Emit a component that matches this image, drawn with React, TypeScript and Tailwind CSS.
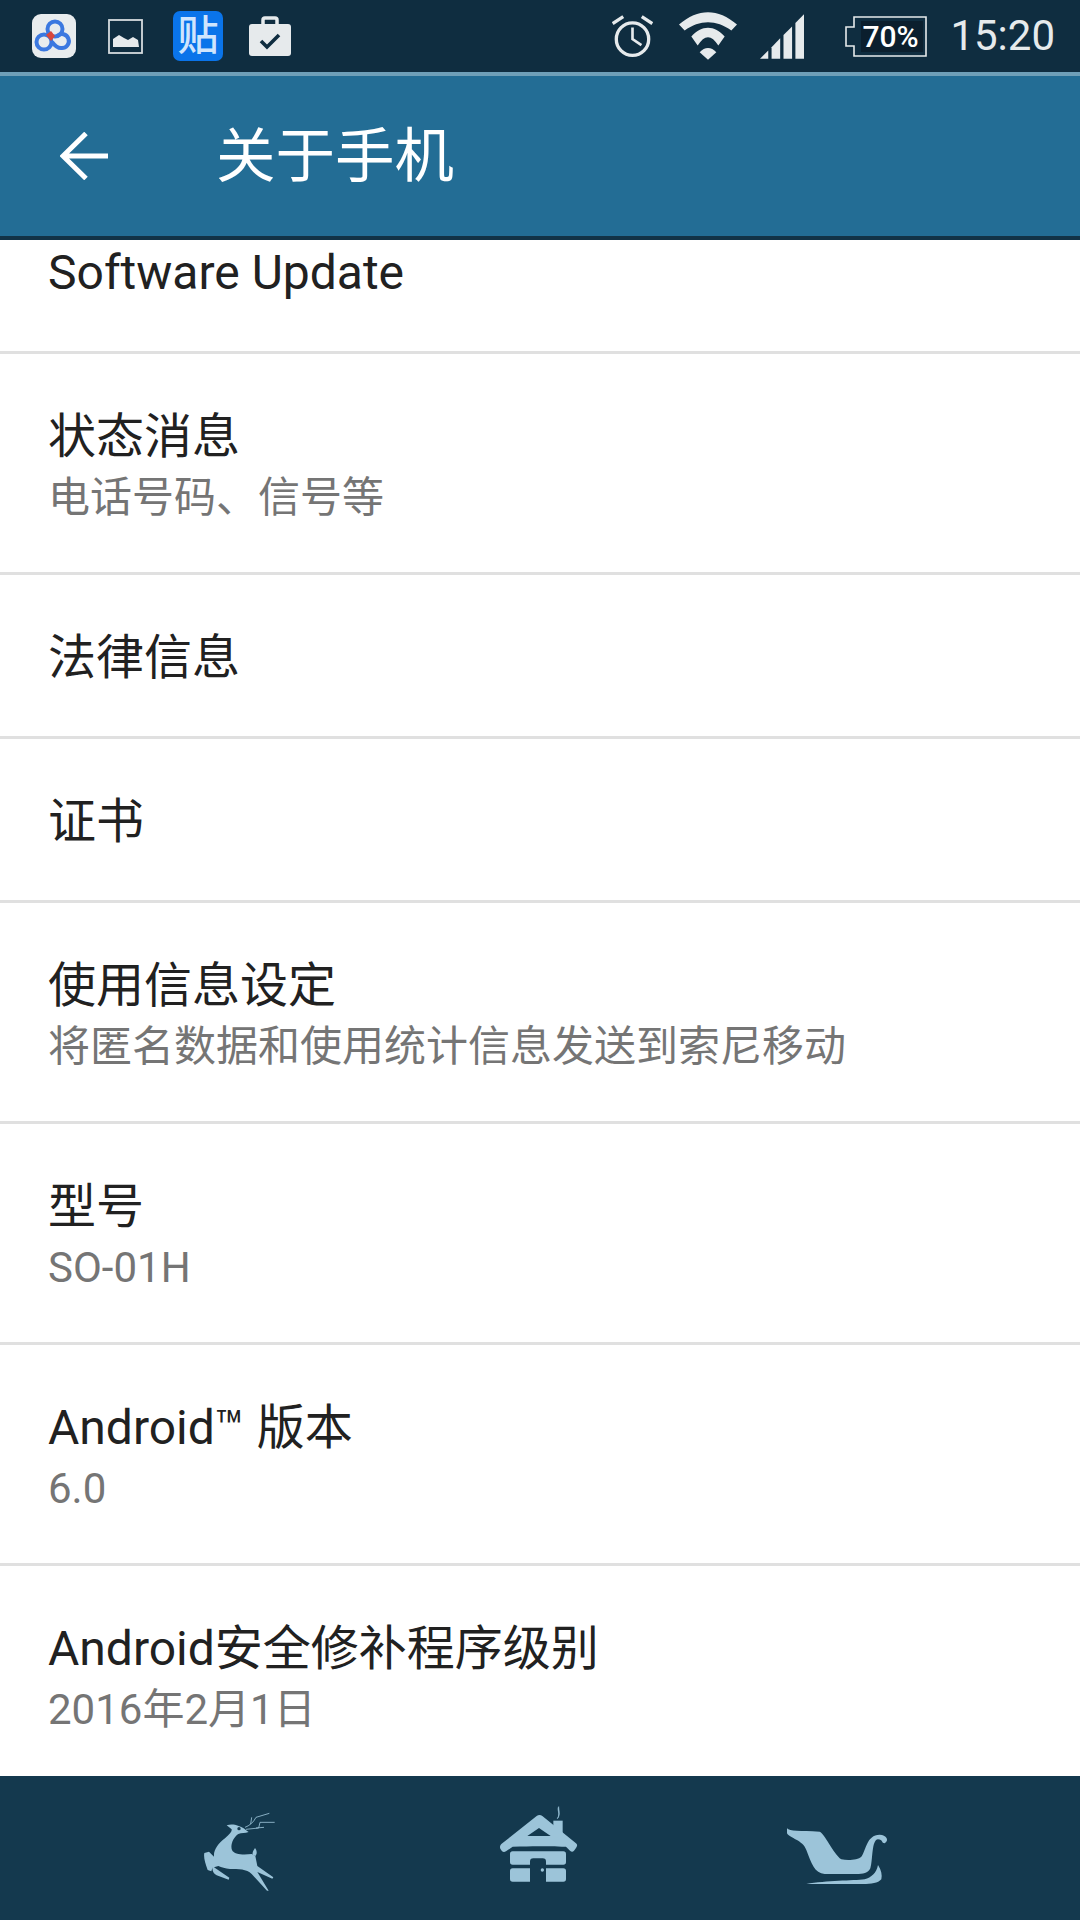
const rows = [
  { title: "状态消息", sub: "电话号码、信号等" },
  { title: "法律信息" },
  { title: "证书" },
  { title: "使用信息设定", sub: "将匿名数据和使用统计信息发送到索尼移动" },
  { title: "型号", sub: "SO-01H" },
  { title: "Android™ 版本", sub: "6.0" },
  { title: "Android安全修补程序级别", sub: "2016年2月1日" },
];

function Row({ title, sub }: { title: string; sub?: string }) {
  return (
    <div
      className={`flex shrink-0 flex-col justify-center border-b-[3px] border-[#e0e0e0] pl-[48px] ${
        sub ? "h-[221px] pt-[7px]" : "h-[164px] pt-[3px]"
      }`}
    >
      <div className="text-[48px] leading-[61px] text-[#212121]">{title}</div>
      {sub && <div className="text-[42px] leading-[61px] text-[#757575]">{sub}</div>}
    </div>
  );
}

function StatusLeft() {
  return (
    <div className="flex items-center">
      {/* cloud app */}
      <div className="ml-[32px] flex h-[44px] w-[44px] items-center justify-center rounded-[9px] bg-[#e8ecee]">
        <svg viewBox="0 0 44 44" className="h-[44px] w-[44px]" fill="none">
          <circle cx="23" cy="15" r="7.5" stroke="#3b78e0" strokeWidth="4" />
          <circle cx="12" cy="28" r="7.5" stroke="#3b78e0" strokeWidth="4" />
          <path d="M20 28c3 4 5 6 9 6a7 7 0 1 0-4-12" stroke="#3b78e0" strokeWidth="4" />
          <path d="M14 21l5-4 4 5-4 5z" fill="#d9473a" />
        </svg>
      </div>
      {/* picture */}
      <svg viewBox="0 0 35 35" className="ml-[32px] h-[35px] w-[35px]">
        <rect x="1" y="1" width="33" height="33" fill="none" stroke="#d5dbde" strokeWidth="1.8" />
        <path d="M5 28V20l6-4 5 3 4 2 5-3 5 3 1 7z" fill="#e6eaec" />
      </svg>
      {/* tieba */}
      <div className="ml-[30px] flex h-[50px] w-[50px] items-center justify-center rounded-[7px] bg-[#0a74ea] text-[41px] font-medium leading-none text-[#cfe5fd]">
        贴
      </div>
      {/* briefcase */}
      <svg viewBox="0 0 42 40" className="ml-[26px] h-[40px] w-[42px]">
        <path d="M14 9V4a2 2 0 0 1 2-2h10a2 2 0 0 1 2 2v5" fill="none" stroke="#e6eaec" strokeWidth="3.5" />
        <rect x="0" y="8" width="42" height="32" rx="3" fill="#e6eaec" />
        <path d="M12 25l6 6 12-12" fill="none" stroke="#0f2d40" strokeWidth="3.6" />
      </svg>
    </div>
  );
}

function StatusRight() {
  return (
    <div className="flex items-center">
      {/* alarm */}
      <svg viewBox="68 45 124 128" className="h-[43px] w-[41px]" fill="none" stroke="#e6eaec">
        <circle cx="130" cy="117" r="49" strokeWidth="10" />
        <path d="M130 82V117L157 135" strokeWidth="8" />
        <path d="M70 70L102 49M190 70L158 49" strokeWidth="10" />
      </svg>
      {/* wifi */}
      <svg viewBox="273 45 174 143" className="ml-[26px] h-[48px] w-[58px]" fill="#e6eaec">
        <path d="M273 82C330 33 390 33 447 82L430 100C385 67 335 67 290 100Z" />
        <path d="M310 118C340 83 380 83 410 118L391 145C370 112 350 112 329 145Z" />
        <path d="M335 165C350 148 370 148 385 165L360 188Z" />
      </svg>
      {/* signal */}
      <svg viewBox="515 45 133 135" className="ml-[23px] h-[45px] w-[44px]" fill="#e6eaec">
        <path d="M515 180L540 155V180Z" />
        <path d="M550 145L576 118V180H550Z" />
        <path d="M586 108L612 82V180H586Z" />
        <path d="M622 72L648 45V180H622Z" />
      </svg>
      {/* battery */}
      <div className="relative ml-[41px] h-[41px] w-[82px]">
        <svg viewBox="0 0 82 41" className="absolute inset-0 h-[41px] w-[82px]">
          <path d="M9 1H81V40H9V30H1V11H9z" fill="none" stroke="#e6eaec" strokeWidth="1.6" />
          <rect x="16" y="5" width="62" height="31" fill="#0b1f2e" />
        </svg>
        <div className="absolute left-[17px] top-0 text-[30px] font-medium leading-[41px] text-white">70%</div>
      </div>
      <div className="ml-[23px] mr-[25px] text-[42px] leading-none text-[#e6eaec]">15:20</div>
    </div>
  );
}

function Deer() {
  return (
    <svg viewBox="150 120 240 288" className="h-[96px] w-[80px]" fill="#9cc4d9">
      <path d="M230 196C242 192 255 194 264 197C278 200 288 210 296 216C285 220 275 218 265 222C250 232 240 255 246 270C252 284 280 285 305 282L316 288L322 318L370 352L367 356L322 336L356 392L351 392L305 342C290 326 265 328 240 327C225 326 215 322 205 318L192 322L238 353L236 359L200 346C190 340 186 332 188 322L184 334L173 330C166 310 160 292 163 279L177 275L192 290C190 270 205 250 225 235C240 222 246 215 245 208Z" />
      <circle cx="267" cy="206" r="5" fill="#14394e" />
      <path d="M308 285C306 275 312 270 315 264C320 270 323 280 316 288Z" />
      <path
        d="M285 202C298 197 310 188 318 172L358 160M302 192L305 172M288 208L326 204L330 187L374 187M318 204L342 202"
        fill="none"
        stroke="#9cc4d9"
        strokeWidth="2.5"
      />
    </svg>
  );
}

function House() {
  return (
    <svg viewBox="0 120 240 288" className="h-[96px] w-[80px]" fill="#9cc4d9">
      <path d="M160 182H188V225H160z" />
      <path d="M176 140C170 150 182 160 172 176C182 165 176 150 176 140Z" stroke="#9cc4d9" strokeWidth="2" />
      <path
        fillRule="evenodd"
        d="M110 168C115 164 122 164 127 168L228 250C233 254 232 258 228 264L222 272C218 277 214 276 210 272L198 260C130 258 100 258 38 260L18 274C12 277 9 276 5 272L1 266C-1 262 0 256 4 252ZM82 228H152L117 204Z"
      />
      <path d="M38 274H190a8 8 0 0 1 8 8V306a8 8 0 0 1-8 8H138V305a10 10 0 0 0-10-10H100a10 10 0 0 0-10 10V314H38a8 8 0 0 1-8-8V282a8 8 0 0 1 8-8Z" />
      <path d="M38 325H90V365H38a8 8 0 0 1-8-8V333a8 8 0 0 1 8-8Z" />
      <path d="M138 325H190a8 8 0 0 1 8 8V357a8 8 0 0 1-8 8H138Z" />
      <circle cx="127" cy="330" r="5" />
    </svg>
  );
}

function Sleigh() {
  return (
    <svg viewBox="850 120 330 288" className="h-[96px] w-[110px]" fill="#9cc4d9">
      <path d="M862 205C870 215 900 212 960 215C975 220 1000 280 1025 298C1045 302 1075 300 1085 290C1100 270 1100 225 1140 224C1160 225 1170 240 1155 250C1145 250 1150 238 1135 238C1115 240 1120 300 1112 325C1105 340 1090 342 1070 342L975 342C945 340 935 310 920 270C910 240 870 235 862 220Z" />
      <path d="M920 372C980 362 1060 362 1095 358C1115 352 1130 340 1135 315C1145 330 1148 345 1145 358C1135 370 1115 372 1090 372Z" />
    </svg>
  );
}

export default function App() {
  return (
    <div className="flex h-[1920px] w-[1080px] flex-col overflow-hidden bg-white font-['Roboto','Noto_Sans_CJK_SC',sans-serif]">
      <div className="flex h-[72px] shrink-0 items-center justify-between bg-[#0f2d40]">
        <StatusLeft />
        <StatusRight />
      </div>

      <div className="flex h-[168px] shrink-0 items-center border-t-[4px] border-b-[4px] border-t-[#6f9fb8] border-b-[#123347] bg-[#236d95]">
        <svg viewBox="0 0 48 48" className="ml-[60px] h-[48px] w-[48px]" fill="none" stroke="white" strokeWidth="5">
          <path d="M48 24H3M26 1.5L3 24l23 22.5" />
        </svg>
        <div className="ml-[108px] mt-[3px] text-[59.5px] font-normal leading-none text-white">关于手机</div>
      </div>

      <div className="min-h-0 flex-1 overflow-hidden">
        <div className="-mt-[50px] flex flex-col">
          <Row title="Software Update" />
          {rows.map((r) => (
            <Row key={r.title} title={r.title} sub={r.sub} />
          ))}
        </div>
      </div>

      <div className="flex h-[144px] shrink-0 items-center bg-[#14394e] pl-[200px]">
        <Deer />
        <div className="ml-[220px]">
          <House />
        </div>
        <div className="ml-[203px]">
          <Sleigh />
        </div>
      </div>
    </div>
  );
}
